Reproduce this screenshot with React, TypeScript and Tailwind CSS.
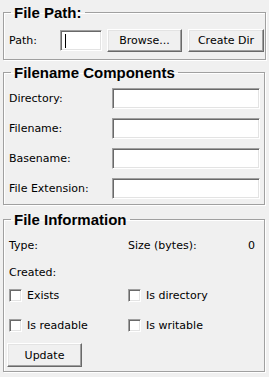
const ui = "font-['DejaVu_Sans',Tahoma,sans-serif] text-[11px] leading-[13px] text-black"

const group =
  "border border-[#a0a0a0] shadow-[inset_1px_1px_0_#fff,1px_1px_0_#fff] pl-[5px]"
const legend =
  "ml-[2px] px-[3px] font-['Liberation_Sans',Arial,sans-serif] font-bold text-[15px] leading-[17px] text-black"
const sunken =
  "bg-white border border-t-[#a0a0a0] border-l-[#a0a0a0] border-r-white border-b-white shadow-[inset_1px_1px_0_#696969,inset_-1px_-1px_0_#e3e3e3]"
const raised =
  "bg-[#f0f0f0] border border-t-white border-l-white border-r-[#696969] border-b-[#696969] shadow-[inset_-1px_-1px_0_#a0a0a0,inset_1px_1px_0_#e3e3e3] flex items-center justify-center shrink-0"

function Button({ label, w, h = "h-[23px]" }: { label: string; w: string; h?: string }) {
  return <div className={`${raised} ${w} ${h}`}>{label}</div>
}

function Check({ label }: { label: string }) {
  return (
    <div className="flex items-center gap-[5px]">
      <span className={`${sunken} w-[13px] h-[13px] shrink-0`} />
      <span>{label}</span>
    </div>
  )
}

const fields = ["Directory:", "Filename:", "Basename:", "File Extension:"]

export default function App() {
  return (
    <div className={`${ui} w-[269px] h-[377px] bg-[#f0f0f0] pt-[4px] pl-[3px] pr-[4px]`}>
      <fieldset className={`${group} pr-[1px] pb-[7px]`}>
        <legend className={legend}>File Path:</legend>
        <div className="mt-[8px] flex items-center h-[23px]">
          <span className="w-[51px] shrink-0">Path:</span>
          <div className={`${sunken} w-[42px] h-[21px] shrink-0 flex items-center pl-[4px]`}>
            <span className="w-px h-[14px] bg-black" />
          </div>
          <div className="ml-[5px]">
            <Button label="Browse..." w="w-[75px]" />
          </div>
          <div className="ml-[6px]">
            <Button label="Create Dir" w="w-[76px]" />
          </div>
        </div>
      </fieldset>

      <fieldset className={`${group} pr-[4px] pb-[5px] mt-[4px]`}>
        <legend className={legend}>Filename Components</legend>
        <div className="mt-[7px] flex flex-col gap-[9px]">
          {fields.map((f) => (
            <div key={f} className="flex items-center h-[21px]">
              <span className="w-[103px] shrink-0">{f}</span>
              <div className={`${sunken} flex-1 h-[21px]`} />
            </div>
          ))}
        </div>
      </fieldset>

      <fieldset className={`${group} pr-[9px] pb-[4px] mt-[6px]`}>
        <legend className={legend}>File Information</legend>
        <div className="mt-[9px] grid grid-cols-[119px_1fr] h-[17px] items-center">
          <span>Type:</span>
          <div className="flex justify-between">
            <span>Size (bytes):</span>
            <span>0</span>
          </div>
        </div>
        <div className="mt-[10px] h-[17px] flex items-center">Created:</div>
        <div className="mt-[6px] grid grid-cols-[119px_1fr] h-[17px] items-center">
          <Check label="Exists" />
          <Check label="Is directory" />
        </div>
        <div className="mt-[13px] grid grid-cols-[119px_1fr] h-[17px] items-center">
          <Check label="Is readable" />
          <Check label="Is writable" />
        </div>
        <div className="mt-[9px] -ml-[2px]">
          <Button label="Update" w="w-[75px]" h="h-[24px]" />
        </div>
      </fieldset>
    </div>
  )
}
